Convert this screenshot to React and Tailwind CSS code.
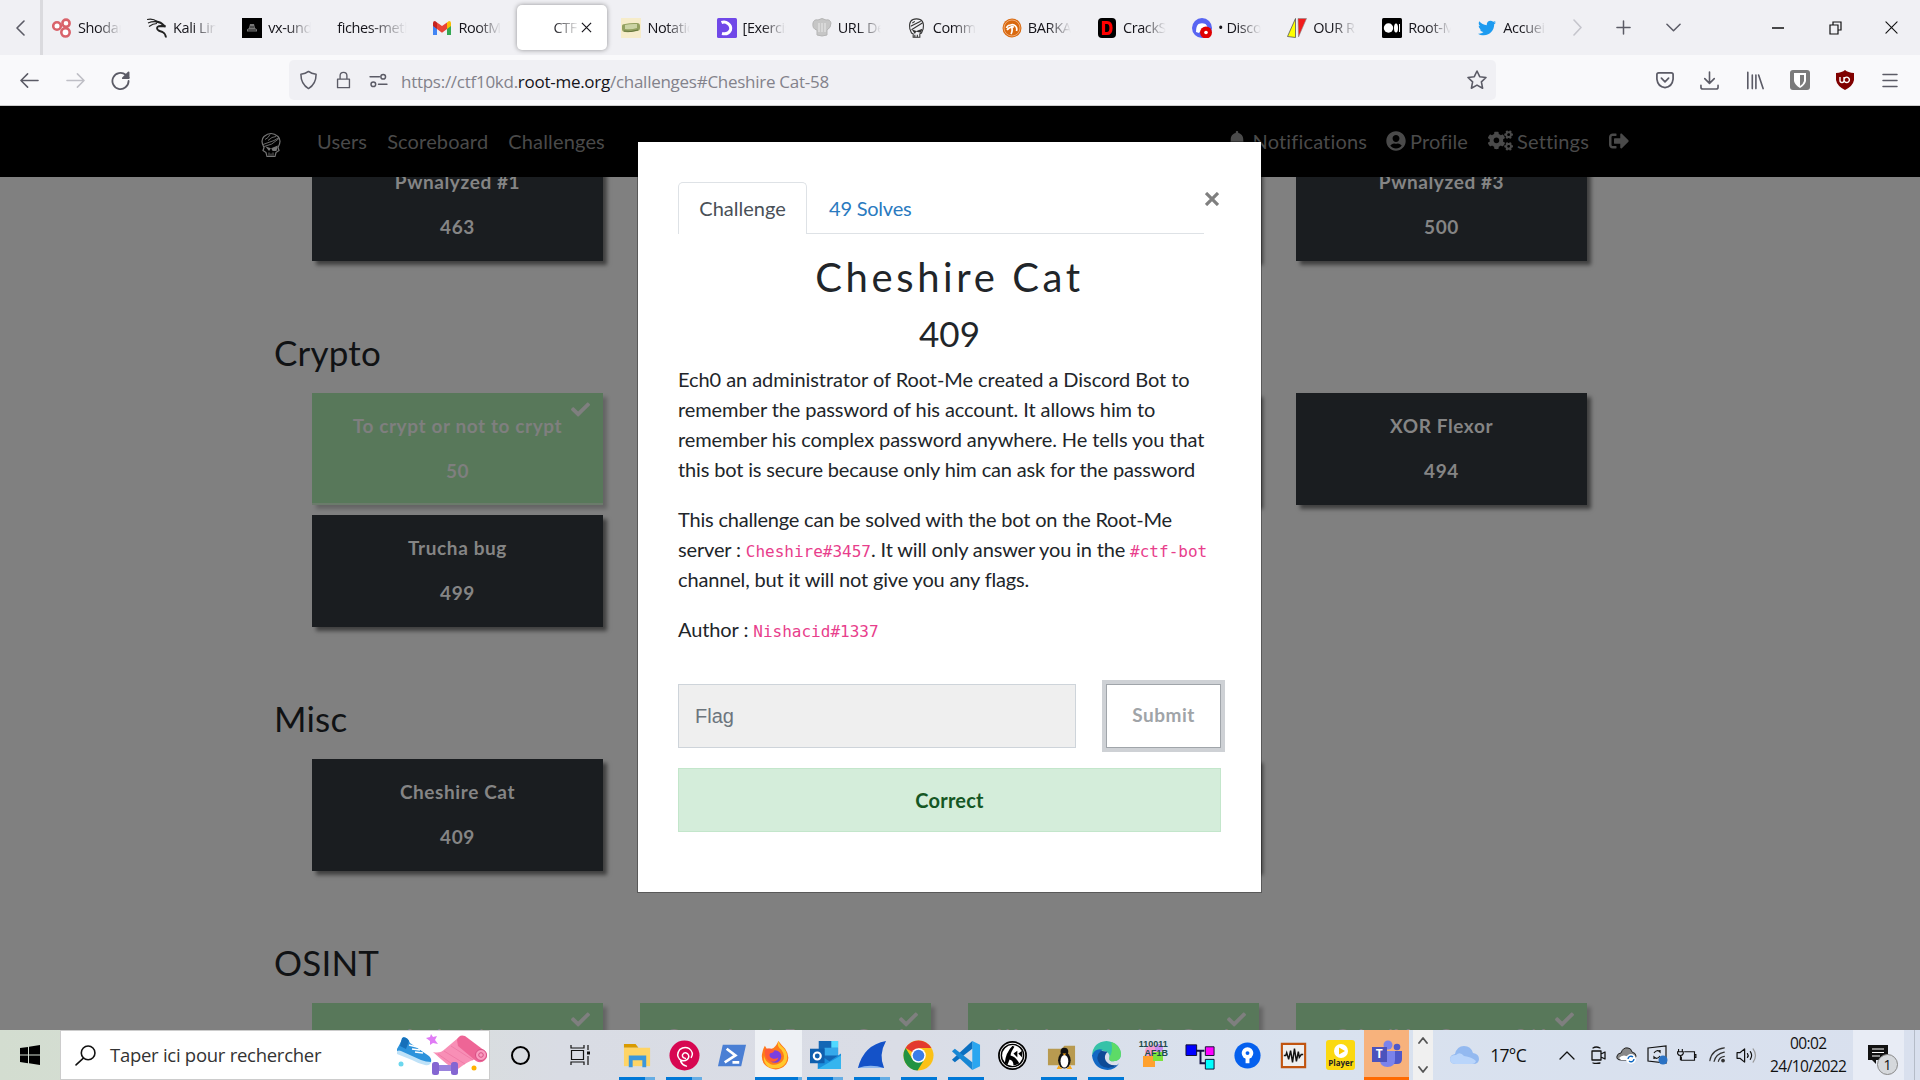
import React from "react";
import { FaBell, FaUserCircle, FaCogs, FaSignOutAlt, FaCheck, FaTwitter } from "react-icons/fa";
import { SiDebian } from "react-icons/si";

const SEGOE = "font-['Open_Sans','Noto_Sans',sans-serif]";

/* ---------- favicons ---------- */
const Fav = {
  shodan: (
    <svg viewBox="0 0 20 20" className="size-5" fill="#fff" stroke="#d9636b" strokeWidth="2.6">
      <circle cx="14" cy="5.2" r="3.6" /><circle cx="5" cy="8" r="3.8" /><circle cx="13.5" cy="14.3" r="4.2" />
    </svg>
  ),
  kali: (
    <svg viewBox="0 0 20 20" className="size-5" fill="none" stroke="#222" strokeWidth="1.5">
      <path d="M0 1.500q6-1.500 10 2M1 5q5-2 9-1M2 8.500q4-3 8-3" strokeWidth="1.2" />
      <path d="M9 3.500q5 .5 8 4l1.500 1-4-.5q-6 0-4 3.500 1 1.500 5 2.500 3 1.500 3.500 5.500" strokeWidth="1.900" />
    </svg>
  ),
  vx: (
    <svg viewBox="0 0 20 20" className="size-5"><path d="M0 0h20v20H0z" fill="#000" /><path d="M8 6h4l1 4 2 1.500v2H5v-2L7 10z" fill="#777" /><path d="M6 12h8M8 9h4" stroke="#222" /></svg>
  ),
  gmail: (
    <svg viewBox="0 0 20 20" className="size-5">
      <path d="M1 17V5h4v12z" fill="#4285f4" /><path d="M15 17V5h4v12z" fill="#34a853" />
      <path d="M15 4.500 17 3q2 0 2 2v3l-4 3z" fill="#fbbc04" /><path d="M1 5q0-2 2-2l2 1.500V11L1 8z" fill="#c5221f" />
      <path d="M5 4.500 10 8l5-3.500V11l-5 3.800L5 11z" fill="#ea4335" />
    </svg>
  ),
  notation: (
    <svg viewBox="0 0 20 20" className="size-5"><path d="M0 0h20v20H0z" fill="#f6ecca" /><path d="M1 8q0-2 3-2 6-1.500 12-1 3 0 3 3v2q0 3-3 3-6 1.500-12 1-3 0-3-3z" fill="#93a060" /><path d="M4 7q6-1.500 12-1v4q-6 2-12 1z" fill="#cbd3a4" /><path d="M3 13q7 1.500 14-1" stroke="#66763c" fill="none" /></svg>
  ),
  exercism: (
    <svg viewBox="0 0 20 20" className="size-5"><rect width="20" height="20" rx="1.500" fill="#7048e8" /><path d="M4.500 4.500Q8 3 11 5.500 14.500 8 13.500 12 11 17 5 15.500" fill="none" stroke="#fff" strokeWidth="3" /></svg>
  ),
  chef: (
    <svg viewBox="0 0 20 20" className="size-5"><path d="M5 17v-5Q0 11 1 5q1-4 5-3 4-3 8 0 4-1 5 3 0 5-4 7v5q-5 2-10 0z" fill="#c6c6c6" stroke="#b5b5b5" /><path d="M7 5v9M10 5v9M13 5v9" stroke="#dedede" strokeWidth="1.500" /></svg>
  ),
  skull: (
    <svg viewBox="0 0 20 24" className="h-5 w-[17px]" fill="none" stroke="#333" strokeWidth="1.300">
      <path d="M2 13Q0 1 10 1t8 12l-2 5-2 1v4H6v-4l-2-1z" /><path d="M3 10 15 4M4 14 17 6M5 6l3-2M8 20v3M11 20v3" strokeWidth="1.300" /><path d="M6 15l3 1-1 2zM11 16l5-2-1 3z" fill="#333" />
    </svg>
  ),
  barka: (
    <svg viewBox="0 0 20 20" className="size-5"><circle cx="10" cy="10" r="9.500" fill="#d9690f" /><circle cx="10" cy="10" r="8" fill="none" stroke="#f5b98a" strokeWidth=".8" /><path d="M4.500 10q1-3 4-3 3-1 5 1 2 2 1 5M9 16q2-3 .500-8M5 12q3-4 7-3" stroke="#fff" strokeWidth="1.700" fill="none" /></svg>
  ),
  crack: (
    <svg viewBox="0 0 20 20" className="size-5"><rect x="1" width="18" height="20" rx="4" fill="#000" /><path d="M6.500 4.500H10q4 0 4 5.500t-4 5.500H6.500z" fill="none" stroke="#f00" strokeWidth="3.200" /></svg>
  ),
  discord: (
    <svg viewBox="0 0 20 20" className="size-5"><circle cx="10" cy="10" r="10" fill="#5865f2" /><path d="M4 14q0-6 2.500-8 3.500-1.500 7 0Q16 8 16 14l-3 1-1-1.500H8L7 15z" fill="#fff" /><circle cx="14" cy="14.500" r="6" fill="#e00000" /><circle cx="14" cy="14.500" r="1.800" fill="#fff" /></svg>
  ),
  our: (
    <svg viewBox="0 0 20 20" className="size-5"><path d="M8.500.5v19l-8-1z" fill="#ff0" stroke="#555" strokeWidth=".8" /><path d="M11 .5h8.500l-8 18.500z" fill="#f21c1c" stroke="#888" strokeWidth=".6" /></svg>
  ),
  medium: (
    <svg viewBox="0 0 20 20" className="size-5"><rect width="20" height="20" rx="1.500" fill="#000" /><g fill="#fff"><circle cx="6.500" cy="10" r="4.700" /><ellipse cx="14" cy="10" rx="2" ry="4.500" /><rect x="17" y="6" width="1" height="8" /></g></svg>
  ),
};

const TABS = [
  ["shodan", "Shodan"], ["kali", "Kali Linux"], ["vx", "vx-under"], [null, "fiches-meth"], ["gmail", "RootMe"],
  ["active", "CTF"], ["notation", "Notation"], ["exercism", "[Exercis"], ["chef", "URL De"], ["skull", "Comma"],
  ["barka", "BARKA"], ["crack", "CrackSt"], ["discord", "• Discord"], ["our", "OUR RE"], ["medium", "Root-M"], ["twitter", "Accueil"],
];

function Tab({ icon, label }) {
  if (icon === "active")
    return (
      <div className="-ml-px mr-[5px] flex h-[45px] w-[90px] shrink-0 items-center rounded-[5px] bg-white pl-[36px] shadow-[0_0_5px_rgba(0,0,0,0.4)]">
        <span className="w-[24px] overflow-hidden whitespace-nowrap text-[14.5px] tracking-[-0.4px] text-[#15141a] [mask-image:linear-gradient(to_right,black,transparent_110%)]">{label}</span>
        <svg viewBox="0 0 12 12" className="ml-[4px] size-[11px]" stroke="#15141a" strokeWidth="1.300"><path d="M1 1 11 11M11 1 1 11" /></svg>
      </div>
    );
  return (
    <div className="flex h-[45px] w-[95.1px] shrink-0 items-center pl-[9px]">
      {icon && (
        <span className="mr-[6px] flex w-5 justify-center">
          {icon === "twitter" ? <FaTwitter size={18} color="#1d9bf0" /> : Fav[icon]}
        </span>
      )}
      <span className={`${icon ? "w-[43px]" : "w-[70px]"} overflow-hidden whitespace-nowrap text-[14.5px] tracking-[-0.4px] text-[#15141a] [mask-image:linear-gradient(to_right,black_45%,transparent)]`}>{label}</span>
    </div>
  );
}

function Line({ d, className, w = 1.6, c = "#5b5b66", box = "0 0 20 20", children }) {
  return (
    <svg viewBox={box} className={`shrink-0 ${className}`} fill="none" stroke={c} strokeWidth={w} strokeLinecap="round" strokeLinejoin="round">
      {d && <path d={d} />}
      {children}
    </svg>
  );
}

function Browser() {
  return (
    <header className={`h-[106px] shrink-0 border-b border-[#cccccc] bg-[#f9f9fb] ${SEGOE}`}>
      <div className="flex h-[55px] items-center bg-[#f0f0f4]">
        <Line className="ml-[15px] h-4 w-[10px]" box="0 0 10 16" d="M9 1 2 8l7 7" />
        <div className="ml-[15px] h-full w-[3px] bg-[#dadade]" />
        {TABS.map(([icon, label]) => <Tab key={label} icon={icon} label={label} />)}
        <Line className="ml-[10px] h-[17px] w-[9px]" box="0 0 9 17" c="#c5c5cc" d="M1 1l7 7.500-7 7.500" />
        <Line className="ml-[34px] size-[15px]" box="0 0 16 16" d="M8 1v14M1 8h14" />
        <Line className="ml-[35px] h-[9px] w-[15px]" box="0 0 16 9" d="M1 1l7 7 7-7" />
        <Line className="ml-[91px] h-[12px] w-[12px]" box="0 0 12 12" c="#111" w={1.300} d="M0 6h12" />
        <svg viewBox="0 0 13 14" className="ml-[45px] h-[14px] w-[13px] shrink-0" fill="none" stroke="#111" strokeWidth="1.200"><path d="M1 4h8v9H1zM4 4V1h8v8H9" /></svg>
        <Line className="ml-[43px] size-[13px]" box="0 0 14 14" c="#111" w={1.200} d="M1 1l12 12M13 1 1 13" />
      </div>
      <div className="flex h-[50px] items-center">
        <Line className="ml-[20px] size-[19px]" d="M19 10H1M8 3l-7 7 7 7" />
        <Line className="ml-[27px] size-[19px]" c="#bfbfc6" d="M1 10h18M12 3l7 7-7 7" />
        <Line className="ml-[26px] size-[19px]" w={1.900} d="M18.500 10.500a8.500 8.500 0 1 1-3-6.500l3 3">
          <path d="M18.500 1.500v6h-6z" fill="#5b5b66" />
        </Line>
        <div className="ml-[159px] flex h-10 w-[1207px] items-center rounded-[5px] bg-[#f0f0f4]">
          <Line className="ml-[10px] h-5 w-[19px]" d="M10 1q3 2.500 8 3 0 10.500-8 15Q2 14.500 2 4q5-.5 8-3z" />
          <Line className="ml-[17px] h-5 w-[17px]" d="M3 9h14v10H3zM6 9V5q0-4 4-4t4 4v4" />
          <Line className="ml-[17px] h-[15px] w-[19px]" box="0 0 20 16"><path d="M1 4h10M10 12h9" /><circle cx="15" cy="4" r="2.500" /><circle cx="4.500" cy="12" r="2.500" /></Line>
          <span className="ml-[13px] w-[440px] whitespace-nowrap pt-[3px] text-[17px] tracking-[-0.27px] text-[#83828b]">
            https://ctf10kd.<span className="text-[#15141a]">root-me.org</span>/challenges#Cheshire Cat-58
          </span>
          <Line className="ml-auto mr-[9px] size-5" d="M10 1l2.700 5.700 6.300.8-4.600 4.300 1.200 6.400L10 15.100l-5.600 3.100 1.200-6.400L1 7.500l6.300-.8z" />
        </div>
        <Line className="ml-[160px] h-[18px] w-[18px]" d="M3 2h14q2 0 2 2v5q-1 8.500-9 9.500Q2 17.500 1 9V4q0-2 2-2zM6 8l4 4 4-4" w={1.900} />
        <Line className="ml-[26px] size-[19px]" d="M10 1v12M5 8l5 5 5-5M1 15v2q0 2 2 2h14q2 0 2-2v-2" w={1.700} />
        <Line className="ml-[27px] h-[19px] w-[18px]" d="M2 1v18M7 4v15M11 4v15M14 4l5 15" w={1.800} />
        <svg viewBox="0 0 20 20" className="ml-[26px] size-5 shrink-0"><rect width="20" height="20" rx="3" fill="#7b7b7b" /><path d="M4 3h12v8q-1 4-6 7-5-3-6-7z" fill="#fff" /><path d="M10 5h4v6q-.5 2.500-4 5z" fill="#7b7b7b" /></svg>
        <svg viewBox="0 0 20 20" className="ml-[25px] size-5 shrink-0"><path d="M10 0q3 2.500 9 3v7q-1 6-9 10Q2 16 1 10V3q6-.5 9-3z" fill="#800000" /><path d="M5 7v3.500q0 2 2 2t2-2V7m0 2.800a2.700 2.700 0 1 0 5.400 0 2.700 2.700 0 1 0-5.400 0" fill="none" stroke="#fff" strokeWidth="1.400" /></svg>
        <Line className="ml-[27px] h-[15px] w-[16px]" box="0 0 16 15" d="M1 1.500h14M1 7.500h14M1 13.500h14" w={1.500} />
      </div>
    </header>
  );
}

/* ---------- CTF page ---------- */
function Card({ title, points, solved }) {
  return (
    <div
      className={`relative ml-[18px] mr-[19px] mb-[10px] flex h-[112px] flex-col items-center pt-[18px] text-[19px] font-bold leading-[30px] tracking-[0.6px] ${
        solved ? "border-b-2 border-[#6b7b6b] bg-[#58785a] text-[#7f7f7f] shadow-[4px_4px_4px_rgba(0,0,0,0.22)]" : "bg-[#1a1d20] text-[#858585] shadow-[4px_4px_4px_rgba(0,0,0,0.5)]"
      }`}
    >
      {solved && <FaCheck className="absolute right-[13px] top-[7px]" size={19} />}
      {title && <p className="whitespace-nowrap">{title}</p>}
      {points && <p className="mt-[15px]">{points}</p>}
    </div>
  );
}

function Section({ title, cards }) {
  return (
    <section>
      {title && <h3 className="mb-[20px] pl-[18px] pt-[60px] text-[35px] leading-[42px] tracking-[0.2px] text-[#101214]">{title}</h3>}
      <div className="ml-[38px] grid w-[1312px] grid-cols-4">
        {cards.map(([t, p, s], i) => <Card key={i} title={t} points={p} solved={s} />)}
      </div>
    </section>
  );
}

function Code({ children }) {
  return <code className="font-['DejaVu_Sans_Mono',monospace] text-[16px] leading-none tracking-normal text-[#e83e8c]">{children}</code>;
}

function Modal() {
  return (
    <div className="mt-[35px] h-[752px] w-[625px] border border-black/30 bg-white bg-clip-padding pl-[40px] pt-[40px] text-[20px] leading-[30px] text-[#212529]">
      <div className="flex">
        <div className="flex h-[52px] w-[526px] border-b border-[#dee2e6]">
          <div className="h-[52px] w-[129px] rounded-t-[5px] border border-b-0 border-[#dee2e6] bg-white pt-[10px] text-center text-[#495057]">Challenge</div>
          <div className="pl-[22px] pt-[11px] tracking-[-0.22px] text-[#2a7ac0]">49 Solves</div>
        </div>
        <svg viewBox="0 0 14 14" className="ml-px mt-[10px] size-[14px]" stroke="#7f7f7f" strokeWidth="3.200"><path d="M1 1l12 12M13 1 1 13" /></svg>
      </div>
      <h2 className="mt-[19px] w-[543px] text-center text-[40px] leading-[48px] tracking-[3.6px]">Cheshire Cat</h2>
      <h3 className="mt-[11px] w-[543px] text-center text-[35px] leading-[42px]">409</h3>
      <p className="mt-[10px] w-[560px] tracking-[-0.1px]">
        <span className="tracking-[-0.06px]">Ech0 an administrator of Root-Me created a Discord Bot to</span><br />
        remember the password of his account. It allows him to<br />
        <span className="tracking-[-0.09px]">remember his complex password anywhere. He tells you that</span><br />
        <span className="tracking-[-0.15px]">this bot is secure because only him can ask for the password</span>
      </p>
      <p className="mt-[20px] w-[560px] tracking-[-0.16px]">
        <span className="tracking-[-0.2px]">This challenge can be solved with the bot on the Root-Me</span><br />
        server : <Code>Cheshire#3457</Code>. It will only answer you in the <Code>#ctf-bot</Code><br />
        channel, but it will not give you any flags.
      </p>
      <p className="mt-[20px] tracking-[-0.1px]">Author : <Code>Nishacid#1337</Code></p>
      <div className="mt-[40px] flex">
        <div className="h-[64px] w-[398px] border border-[#ced4da] bg-[#efefef] pl-[16px] pt-[16px] font-['Liberation_Sans',sans-serif] text-[20px] text-[#6c757d]">Flag</div>
        <div className="ml-[30px] h-[64px] w-[115px] border border-[#a0a5aa] bg-white pt-[15px] text-center text-[19px] font-bold tracking-[0.5px] text-[#a0a4a8] shadow-[0_0_0_4px_#ced1d5]">Submit</div>
      </div>
      <div className="mt-[20px] h-[64px] w-[543px] border border-[#c3e6cb] bg-[#d4edda] pt-[16px] text-center font-bold tracking-[0.2px] text-[#155724]">Correct</div>
    </div>
  );
}

function Page() {
  return (
    <main className="relative h-[924px] shrink-0 overflow-hidden bg-[#808080] font-['Lato',sans-serif]">
      <nav className="relative z-10 flex h-[71px] items-center bg-black text-[20px] tracking-[0.16px] text-[#4a4a4a]">
        <svg viewBox="0 0 20 25" className="ml-[261px] mt-[6px] h-[26px] w-[20px]" fill="none" stroke="#777" strokeWidth="1.200">
          <path d="M3 15Q-1 8 3 4q7-6 14 0 4 4 0 11l1 3-3 2-1 4H6l-1-4-3-2z" />
          <path d="M2 12 13 8l5-3M3 14q8-1 15-8M4 7l3-2 2-3M7 8l4-3 4-1M8 20v4M10 21v3M12 20v4" strokeWidth=".9" />
          <path d="M6 15l3 1-1 1.500zM11 16l5-2-1 4h-3z" fill="#777" />
        </svg>
        <div className="flex pb-[2px]">
          <span className="ml-[36px]">Users</span>
          <span className="ml-[20px]">Scoreboard</span>
          <span className="ml-[20px]">Challenges</span>
        </div>
        <div className="ml-auto mr-[291px] flex items-center pb-[2px]">
          <FaBell className="mr-[6px]" size={20} />Notifications
          <FaUserCircle className="ml-[19px] mr-[4px]" size={20} />Profile
          <FaCogs className="ml-[20px] mr-[4px]" size={25} />Settings
          <FaSignOutAlt className="ml-[20px]" size={20} />
        </div>
      </nav>
      <div className="-mt-[28px] ml-[256px]">
        <Section cards={[["Pwnalyzed #1", "463"], [], [], ["Pwnalyzed #3", "500"]]} />
        <Section title="Crypto" cards={[["To crypt or not to crypt", "50", true], [], [], ["XOR Flexor", "494"], ["Trucha bug", "499"]]} />
        <Section title="Misc" cards={[["Cheshire Cat", "409"], [], []]} />
        <Section title="OSINT" cards={[["At that time", "50", true], ["Groundwork Forums Good", "50", true], ["Watch your back 2x Good", "50", true], ["Cyber'Men Contact 2/4", "50", true]]} />
      </div>
      <div className="absolute inset-x-0 top-0 z-20 flex w-[1899px] justify-center">
        <Modal />
      </div>
    </main>
  );
}

/* ---------- taskbar ---------- */
const App32 = {
  explorer: (<svg viewBox="0 0 32 32"><path d="M2 4h12l3 4H2z" fill="#d99a00" /><path d="M2 8h27v19H2z" fill="#ffd465" /><path d="M7 28V16h18v12h-4v-7H11v7z" fill="#3c97dc" /></svg>),
  debian: (
    <svg viewBox="0 0 32 32"><circle cx="16" cy="16" r="15.500" fill="#d70751" /><path d="M17 19q-4-1-3-4 2-3 5-1 3 3 0 6-4 3-8 0-4-5 0-10 5-4 10-1 5 4 2 9M12 22q2 4 6 5" fill="none" stroke="#fff" strokeWidth="1.500" strokeLinecap="round" /></svg>
  ),
  ps: (<svg viewBox="0 0 32 32"><path d="M7 5h24l-5 22H2z" fill="#4a7fd4" /><path d="M11 9l9 7-11 7M17 23h7" stroke="#fff" strokeWidth="2.800" fill="none" /></svg>),
  firefox: (<svg viewBox="0 0 32 32" className="-ml-[5px]"><path d="M19 1q3 4 7 8 6 9 1 16-7 8-17 4Q1 25 2 15q1-6 3-9l2 3 5 0q4-1 7-8z" fill="#ff7a1a" /><path d="M19 1q-2 6 3 9 5 7 1 12-5 5-12 3-6-3-7-9-1 8 5 12 13 4 18-5 3-8-2-14Q20 5 19 1z" fill="#ffc92e" /><circle cx="15.500" cy="17" r="6.500" fill="#7a3fe0" /><path d="M5 10q5-3 10 1-1 2-5 3-1 4 3 5 3 1 6-1-2 6-9 4-6-4-5-12z" fill="#ff5a36" /></svg>),
  outlook: (<svg viewBox="0 0 32 32"><path d="M9 1h20v22H9z" fill="#1367b5" /><path d="M15 8h14v8H15z" fill="#35a9ea" /><path d="M22 1h7v7h-7z" fill="#50d9ff" /><path d="M8 14l12 8 12-8v16H8z" fill="#1a8fdc" /><path d="M8 30l24-14v14z" fill="#35b5ef" /><path d="M0 9h15v15H0z" fill="#0f5fae" /><circle cx="7.500" cy="16.500" r="3.600" fill="none" stroke="#fff" strokeWidth="2.200" /></svg>),
  shark: (<svg viewBox="0 0 32 32"><path d="M2 29Q8 5 31 1q-8 14-2 28z" fill="#1452c8" /><path d="M2 29q13-5 27 0z" fill="#8fb8ee" /></svg>),
  chrome: (<svg viewBox="0 0 32 32"><circle cx="16" cy="16" r="15.500" fill="#fbc116" /><path d="M16 16 2.600 8.200A15.500 15.500 0 0 1 29.400 8.200H16z" fill="#e33b2e" /><path d="M2.600 8.200A15.500 15.500 0 0 0 15 31.500l7-11.500-12 0z" fill="#229342" /><circle cx="16" cy="16" r="7.500" fill="#fff" /><circle cx="16" cy="16" r="6" fill="#3a7de8" /></svg>),
  vscode: (<svg viewBox="0 0 32 32"><path d="M23 1l8 4v22l-8 4z" fill="#2aa6f0" /><path d="M23 1v8L5 23l-3-2.500z" fill="#0a6fc0" /><path d="M23 31v-8L5 9l-3 2.500z" fill="#1787d4" /></svg>),
  k: (<svg viewBox="0 0 32 32"><circle cx="16" cy="16" r="14" fill="#fff" stroke="#000" strokeWidth="1.800" /><circle cx="16" cy="16" r="11.500" fill="none" stroke="#000" strokeWidth="1.500" /><path d="M8 24Q9 13 16 6l2 1q-4 6-4 9 5 1 9 8-3 2-6 2 0-5-4-6l-2 5zM17 14l4-3v7zM22 14l4-3v7z" fill="#000" /></svg>),
  tux: (<svg viewBox="0 0 32 32" className="ml-[4px]"><path d="M2 9h14l3-3h11v20H2z" fill="#b89a50" /><ellipse cx="19" cy="21" rx="6.500" ry="8.500" fill="#111" /><circle cx="19" cy="12" r="4" fill="#111" /><ellipse cx="19" cy="22" rx="4" ry="6.500" fill="#fff" /><path d="M17 14h4l-2 2zM11 30l2-4 4 4zM21 30l4-4 2 4z" fill="#f6a81c" /></svg>),
  edge: (<svg viewBox="0 0 32 32"><path d="M1 16Q2 2 16 1q13 1 15 13 0 8-8 8-5 0-4-4 1-6-7-7-8-1-11 5z" fill="#36c2a8" /><path d="M21 2q9 3 10 12 0 8-8 8-5 0-4-4 4-6 2-16z" fill="#5ddb67" /><path d="M1 16q3-8 11-6-5 3-4 9 2 9 12 9 5 0 9-4-4 7-12 7Q3 30 1 16z" fill="#1268c4" /><path d="M10 11q-7 7 0 15 8 6 17 0-9 1-12-5-2-5 2-9z" fill="#0d4a96" /></svg>),
  tree: (<svg viewBox="0 0 32 32"><path d="M10 11h10M16 11v13h5" stroke="#114" strokeWidth="2" fill="none" /><path d="M1 5h11v11H1z" fill="#00f" stroke="#113" /><path d="M21 7h9v9h-9z" fill="#f0f" stroke="#113" /><path d="M21 20h9v10h-9z" fill="#0ff" stroke="#113" /></svg>),
  key: (<svg viewBox="0 0 32 32"><circle cx="16" cy="16" r="13.500" fill="#0560ee" /><circle cx="16" cy="13.500" r="6" fill="#fff" /><path d="M14 15h4v9h-4z" fill="#fff" /><circle cx="16" cy="13.500" r="2" fill="#0560ee" /></svg>),
  wave: (<svg viewBox="0 0 32 32"><path d="M4 4h24v24H4z" fill="#eee" stroke="#c1540f" strokeWidth="2.200" /><path d="M6 16h2l1-3 2 7 2-9 2 12 2-14 2 13 2-10 1 6 2-3h2" stroke="#111" strokeWidth="1.500" fill="none" /></svg>),
};

function Slot({ children, bar, active, tail }) {
  return (
    <div className={`flex h-[50px] w-[46.9px] shrink-0 flex-col items-center ${active ? "bg-[#eef1f5]" : ""}`}>
      <div className="flex h-[47px] items-center [&>svg]:size-[31px] pt-[3px]">{children}</div>
      {bar && <div className={`flex h-[3px] ${active ? "w-full" : "w-[36px]"} bg-[#0078d7]`}>{tail && <div className={`ml-auto h-full ${active ? "w-[4px]" : "w-[10px]"} bg-[#66ade4]`} />}</div>}
    </div>
  );
}

function Taskbar() {
  return (
    <footer className={`flex h-[50px] shrink-0 items-center bg-[linear-gradient(to_right,#d3ddd0_0px,#d8ded9_380px,#d9dce4_560px,#dadde6_900px,#d9e2ef_1300px,#d9e0ee_1920px)] text-[#111] ${SEGOE}`}>
      <svg viewBox="0 0 20 20" className="ml-[20px] size-5 shrink-0"><path d="M0 3l8-1.100V9.500H0zM9 1.800 20 0v9.500H9zM0 10.500h8v7.700L0 17zM9 10.500h11V20L9 18.300z" /></svg>
      <div className="ml-[20px] flex h-[50px] w-[430px] shrink-0 items-center border border-[#ccc] bg-white">
        <Line className="ml-[14px] size-[21px]" c="#111" w={1.500}><circle cx="12.500" cy="7.500" r="6.500" /><path d="M8 12.500 1 19" /></Line>
        <span className="ml-[14px] w-[214px] whitespace-nowrap text-[18.5px] tracking-[-0.27px] text-[#333]">Taper ici pour rechercher</span>
        <svg viewBox="0 0 92 42" className="ml-[72px] h-[42px] w-[92px]">
          <path d="M1 15Q4 10 7 3q5 0 7 6l19 13q3 3 2 6-6 1-11-1L1 19z" fill="#2d93dc" />
          <path d="M6 4q4-2 7 3l-3 8-6-3z" fill="#1670ba" />
          <path d="M1 17q2-1 4 0l20 9q5 2 10 2-1 4-6 3-8-2-13-5L1 20z" fill="#bfe2f8" />
          <path d="M13 11l8 2M16 15l8 1M19 18l8 1" stroke="#fff" strokeWidth="1.400" />
          <path d="M35 0l2 3 4-1-2 4 3 4-5-1-3 2v-4l-4-3 4-1z" fill="#e07bf5" />
          <path d="M37 18q7 2 12-3L62 4l22 20q-10 2-18 8-5 4-7 4Q50 30 37 18z" fill="#f88fb6" />
          <path d="M42 20l20 14M48 17l21 13M55 12l22 14" stroke="#ee76a3" strokeWidth=".8" />
          <path d="M61 6q2-6 8-4l20 15q4 5 0 9t-9 1L62 12z" fill="#ee6596" /><circle cx="85" cy="21" r="5.500" fill="#fa9cc0" stroke="#d84f84" /><circle cx="85" cy="21" r="2.300" fill="none" stroke="#d84f84" />
          <rect x="40" y="31" width="17" height="6" fill="#9a83dd" /><rect x="36" y="28" width="7" height="13" rx="2.500" fill="#8466d2" /><rect x="55" y="28" width="7" height="13" rx="2.500" fill="#8466d2" />
          <circle cx="5" cy="30" r="2.500" fill="#6bd7ee" /><circle cx="78" cy="34" r="2.500" fill="#ffb200" />
        </svg>
      </div>
      <div className="ml-[21px] size-[19px] shrink-0 rounded-full border-[2.5px] border-black" />
      <svg viewBox="0 0 20 20" className="ml-[40px] size-[20px] shrink-0" fill="none" stroke="#111" strokeWidth="1.200"><path d="M1 0v3h13V0M1 20v-3h13v3M1.500 5.500h12v9h-12zM18 0v5M18 11v9" /><path d="M17 6.500h3v3h-3z" fill="#111" stroke="none" /></svg>
      <div className="ml-[24px] flex">
        <Slot bar tail>{App32.explorer}</Slot>
        <Slot bar tail>{App32.debian}</Slot>
        <Slot>{App32.ps}</Slot>
        <Slot bar active tail>{App32.firefox}</Slot>
        <Slot bar tail>{App32.outlook}</Slot>
        <Slot bar tail>{App32.shark}</Slot>
        <Slot bar>{App32.chrome}</Slot>
        <Slot bar>{App32.vscode}</Slot>
        <Slot>{App32.k}</Slot>
        <Slot bar>{App32.tux}</Slot>
        <Slot bar>{App32.edge}</Slot>
        <Slot>
          <div className="relative flex h-[34px] w-[31px] flex-col items-center pt-[2px] font-['Liberation_Sans',sans-serif] text-[9px] font-bold leading-[9px] text-[#1d4a4a]">
            <svg viewBox="0 0 31 34" className="absolute inset-0 h-[34px] w-[31px]"><circle cx="13" cy="13" r="6" fill="#f59ad0" /><path d="M5 18h12v11H5z" fill="#ffa12e" /><path d="M15 14h10v9H15z" fill="#7be33b" /><circle cx="21" cy="10" r="4" fill="#c58cf0" /></svg>
            <span className="relative">110011</span><span className="relative ml-[6px]">AF1B</span>
          </div>
        </Slot>
        <Slot>{App32.tree}</Slot>
        <Slot>{App32.key}</Slot>
        <Slot>{App32.wave}</Slot>
        <Slot>
          <div className="flex h-[30px] w-[29px] flex-col items-center rounded-[3px] bg-[#fbd910] pt-[4px] text-[8px] font-bold leading-[9px] text-[#222]">
            <svg viewBox="0 0 14 14" className="size-[14px]"><circle cx="7" cy="7" r="7" fill="#fff" /><path d="M5 3.500 11 7l-6 3.500z" fill="#fbc800" /></svg>Player
          </div>
        </Slot>
      </div>
      <div className="flex h-[50px] w-[45px] shrink-0 items-center justify-center border-b-[3px] border-[#ff6a00] bg-[#f7b27c]">
        <div className="relative flex size-[30px] items-center">
          <svg viewBox="0 0 30 30" className="absolute inset-0 size-[30px]"><circle cx="16" cy="6" r="4.500" fill="#7b83eb" /><circle cx="25" cy="8" r="3.300" fill="#5059c9" /><path d="M20 12h10v8q0 5-5 5h-5z" fill="#5059c9" /><path d="M8 12h15v9q0 7-7.500 7T8 21z" fill="#7b83eb" /><path d="M0 8h15v15H0z" fill="#4b53bc" /></svg>
          <span className="relative w-[15px] text-center text-[12px] font-bold leading-[15px] text-white">T</span>
        </div>
      </div>
      <div className="ml-[4px] flex h-[50px] w-[20px] shrink-0 flex-col items-center justify-between bg-[#f0f0f0] py-[7px]">
        <Line className="h-[7px] w-[10px]" box="0 0 10 7" c="#555" w={1.800} d="M1 6l4-5 4 5" />
        <Line className="h-[7px] w-[10px]" box="0 0 10 7" c="#555" w={1.800} d="M1 1l4 5 4-5" />
      </div>
      <svg viewBox="0 0 30 20" className="ml-[16px] h-[20px] w-[30px] shrink-0"><path d="M7 19q-6 0-6-5 0-4 5-5 2-8 9-8t9 7q6 1 6 6t-6 5z" fill="#93b9f0" /><path d="M7 19q-6 0-6-5 0-4 6-4 4-4 8 1 8 1 12 5-1 3-4 3z" fill="#b9d5fb" /></svg>
      <span className="ml-[11px] w-[38px] whitespace-nowrap text-[17.5px] tracking-[-0.7px]">17°C</span>
      <Line className="ml-[31px] h-[9px] w-[16px]" box="0 0 16 9" c="#111" w={1.300} d="M1 8l7-7 7 7" />
      <Line className="ml-[15px] h-[18px] w-[17px]" box="0 0 17 18" c="#111" w={1.300} d="M2 5h9v9H2zM11 8l4-2v7l-4-2M3 2q3-2 7 0M3 17q3 1 7 0" />
      <svg viewBox="0 0 21 18" className="ml-[9px] h-[18px] w-[21px] shrink-0"><path d="M5 14q-5 0-4-4 1-3 4-3 2-6 7-5 3 0 4 4 4 1 4 4t-3 4z" fill="#888" stroke="#222" /><path d="M3 12q4-5 12 0l-2 2H5z" fill="#fff" /><circle cx="15" cy="13" r="5" fill="#fff" /><path d="M12 13a3 3 0 0 1 5-2M18 13a3 3 0 0 1-5 2" stroke="#0b66c2" fill="none" strokeWidth="1.400" /></svg>
      <svg viewBox="0 0 22 20" className="ml-[10px] h-[20px] w-[22px] shrink-0" fill="none" stroke="#111" strokeWidth="1.200"><path d="M1 3l18-2v17L1 16zM7 8q3-4 6-1v-2M13 11q-3 4-6 1v2" /><circle cx="16" cy="15" r="4.500" fill="#2a72c4" stroke="none" /></svg>
      <svg viewBox="0 0 20 16" className="ml-[8px] h-[15px] w-[20px] shrink-0" fill="none" stroke="#111" strokeWidth="1.200"><path d="M7 4h11v9H4V9M18 7h1.500v3H18M1 1v3M5 1v3M0 4h6v2q-1 2-3 2t-3-2zM3 8v5" /></svg>
      <Line className="ml-[12px] size-[17px]" c="#333" w={1.400} d="M1 16Q3 3 18 1M6 17Q8 8 18 6M11 17q1-5 7-6"><circle cx="16.500" cy="16" r="1.500" fill="#333" /></Line>
      <Line className="ml-[10px] h-[17px] w-[21px]" box="0 0 22 18" c="#111" w={1.300} d="M1 6h3l5-4v14l-5-4H1zM12 7q1.500 2 0 4M15 5q3 4 0 8"><path d="M18 2q5 7 0 14" stroke="#999" /></Line>
      <div className="ml-[9px] flex h-[50px] w-[84px] shrink-0 flex-col items-center pt-[2px] text-[15.5px] leading-[23px] tracking-[-0.6px]">
        <span>00:02</span><span>24/10/2022</span>
      </div>
      <div className="ml-auto mr-[10px] flex h-[50px] w-[51px] shrink-0 items-center bg-[#e8ecf5] pl-[15px]">
        <div className="relative size-[20px]">
          <svg viewBox="0 0 20 20" className="size-[20px]"><path d="M0 0h20v15H8v4l-4-4H0z" fill="#111" /><path d="M4 4h12M4 7.500h12M4 11h8" stroke="#fff" strokeWidth="1.200" /></svg>
          <span className="absolute left-[9px] top-[9px] flex size-[21px] items-center justify-center rounded-full border border-[#888] bg-[#d5d8dc] text-[14px] leading-none">1</span>
        </div>
      </div>
      <div className="mr-[5px] h-[50px] w-px shrink-0 bg-[#b5bcc8]" />
    </footer>
  );
}

export default function App() {
  return (
    <div className="flex h-[1080px] w-[1920px] flex-col overflow-hidden">
      <Browser />
      <Page />
      <Taskbar />
    </div>
  );
}
